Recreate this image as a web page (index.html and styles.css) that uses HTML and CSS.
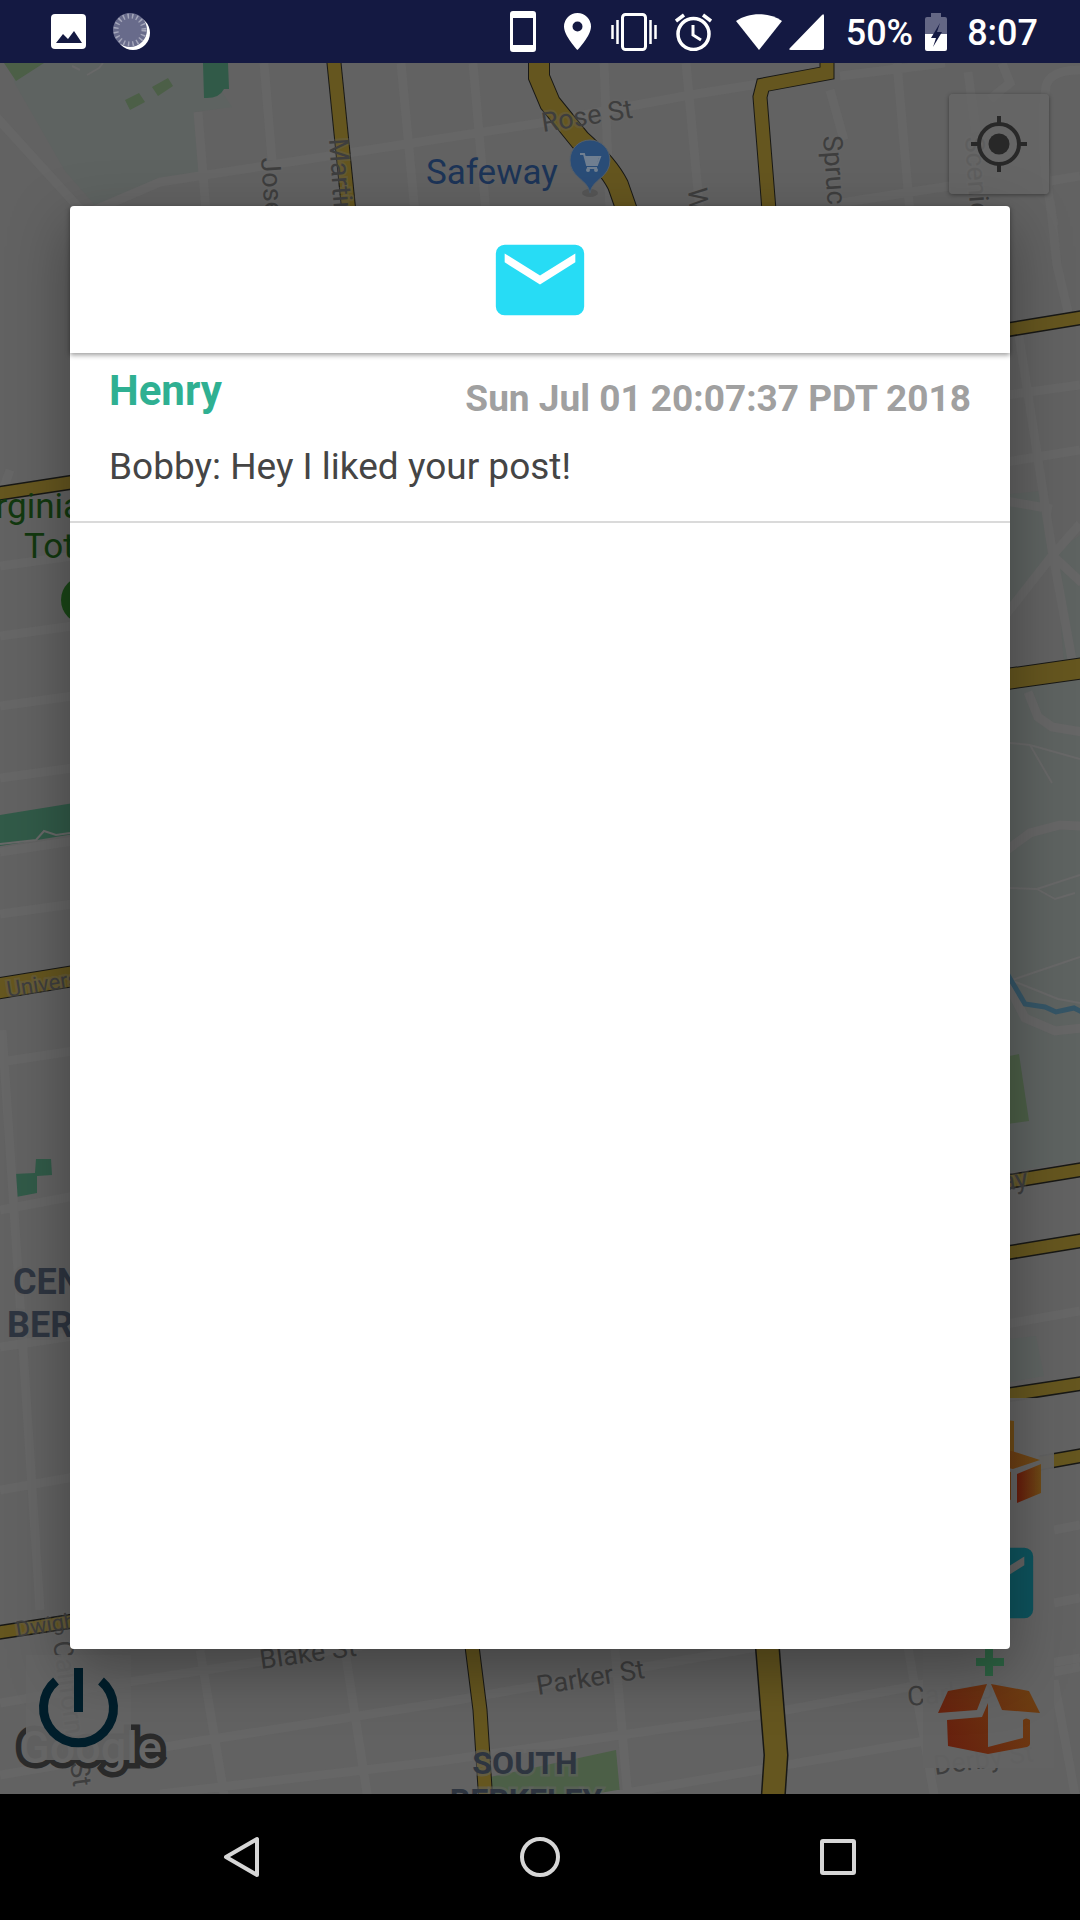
FILE: index.html
```html
<!DOCTYPE html>
<html lang="en">
<head>
<meta charset="utf-8">
<meta name="viewport" content="width=device-width, initial-scale=1">
<title>Messages</title>
<link rel="stylesheet" href="styles.css">
</head>
<body>
<header class="status">
  <div class="status-group">
    <svg width="35" height="35" viewBox="0 0 35 35"><rect width="35" height="35" rx="4" fill="#fff"/><path d="M5 29 12 20l5 5 6-8 8 12z" fill="#141942"/></svg>
    <svg width="38" height="39" viewBox="0 0 38 39"><circle cx="20" cy="21" r="17" fill="#fff"/><circle cx="17" cy="18" r="17" fill="#686b8b"/><circle cx="17" cy="18" r="14" fill="none" stroke="#a4a6ba" stroke-width="5" stroke-dasharray="1.5 3"/></svg>
  </div>
  <div class="status-group status-right">
    <svg class="i-phone" width="26" height="41" viewBox="0 0 26 41"><path fill="#fff" fill-rule="evenodd" d="M3 0h20a3 3 0 0 1 3 3v35a3 3 0 0 1-3 3H3a3 3 0 0 1-3-3V3a3 3 0 0 1 3-3zm0 7v27h20V7z"/></svg>
    <svg class="i-pin" width="27" height="37" viewBox="0 0 27 37"><path fill="#fff" fill-rule="evenodd" d="M13.500 0A13.500 13.500 0 0 1 27 13.500C27 23 13.500 37 13.500 37S0 23 0 13.500A13.500 13.500 0 0 1 13.500 0zm0 8.500a5 5 0 1 0 0 10 5 5 0 0 0 0-10z"/></svg>
    <svg class="i-vib" width="46" height="38" viewBox="0 0 46 38"><g fill="none" stroke="#fff" stroke-width="3"><rect x="11.500" y="1.500" width="23" height="35" rx="3"/><path d="M1.500 12v14M6.500 7v24M39.500 7v24M44.500 12v14" stroke-width="2.500"/></g></svg>
    <svg class="i-alarm" width="37" height="38" viewBox="0 0 37 38"><g fill="none" stroke="#fff" stroke-width="3.500"><circle cx="18.500" cy="21" r="15.500"/><path d="M1 8l8-6M36 8l-8-6"/><path d="M18 12v10l8 5" stroke-width="3"/></g></svg>
    <svg class="i-wifi" width="46" height="36" viewBox="0 0 46 36"><path fill="#fff" d="M23 36 0 7c13-9 33-9 46 0z"/></svg>
    <svg class="i-cell" width="35" height="36" viewBox="0 0 35 36"><path fill="#fff" d="M33 1q2-2 2 1v32q0 2-2 2H2q-3 0-1-2z"/></svg>
    <span class="percent">50%</span>
    <svg class="i-batt" width="22" height="38" viewBox="0 0 22 38"><path fill="#646785" d="M6 0h10v4h4q2 0 2 2v15H0V6q0-2 2-2h4z"/><path fill="#fff" d="M0 21h22v15q0 2-2 2H2q-2 0-2-2z"/><path fill="#141942" d="M15 10 6 25h5l-3 9 9-15h-5z"/></svg>
    <span>8:07</span>
  </div>
</header>

<main class="stage">
  <svg class="map" viewBox="0 63 1080 1731" preserveAspectRatio="xMidYMid slice" aria-label="Map">
    <rect y="63" width="1080" height="1731" fill="#626262"/>
    <!-- open ground -->
    <g fill="#5e6361">
      <path d="M14 63h189l29 44-37 5 5 66-40 8-60 25-35-40L14 82z"/>
      <path d="M1000 495l40-4 12 60-42 60zM1055 553l25-18v125l-16 3zM1000 690l80-10v480l-80 14z"/>
      <path d="M1000 1340l36-4 8 40-44 8z"/>
    </g>
    <!-- parks -->
    <g fill="#4c5f47">
      <path d="M4 63h40L16 81zM125 100l14-7 6 9-15 8zM152 87l16-9 5 8-15 10z"/>
      <path d="M1000 1058l19-4 10 67-29 4zM488 1794l2-17 126-27 4 44z"/>
    </g>
    <g fill="#315a48">
      <path d="M203 63h25l1 26h-5q-5 10-20 9z"/>
      <path d="M0 815l80-13v31l-80 13z"/>
      <path d="M14 1174l21-1 1-14h15l1 16-15 1v17l-21 4z"/>
    </g>
    <!-- side streets -->
    <g class="streets">
      <path d="M-10 110 90 220M198 112l8 100M264 63l8 97M401 63l14 150M473 63l13 150M95 210l65-28 240-37 140-22 150-28 75-12M840 76l105-13M604 63l6 150M686 63l14 150M897 63l13 150M968 72l8 60M1080 70q-30 0-34 16-8 60 8 140M1050 181l30-5M1002 63l8 20-20 16M830 90l14 50M840 203l110-17"/>
      <path d="M0 566l80-11M0 636l80-11M0 706l80-11M0 778l80-11M0 852l80-12M0 914l80-11M0 1062l80-12M0 1210l80-15M0 1347l80-12M0 1490l80-14M2 1030l12 180 26 400M10 470l-14 40"/>
      <path d="M1050 200l7 65 11 47M1019 336l33 214 21 115M1000 396l80-11M1000 463l80-13M1000 500l52 9M1000 622l52-66 28-32M1052 555l30 28M1000 855l30-22 30-8 22 1M1003 975l22 43 30 13 27-3M1028 692l10 25 14 10 30 5M1000 1325l80-14M1054 1530l26-5M1054 1603l26-5M1054 1672l26-5"/>
      <path d="M0 1703l70-12 310-48M0 1775l200-34 240-38 340-60M160 1794l280-33 320-46 170-32 150-25M500 1815l430-75M200 1650l25 150M345 1650l23 150M615 1649l13 150M905 1630l30 170M1054 1680l22 120"/>
    </g>
    <g fill="none" stroke="#686868" stroke-width="2">
      <path d="M72 66l8 4M87 75l12-7 4-5M1010 888l27 1 43-14M1037 889l18 10 20-6M1003 983l77-26M1013 981l45 18 22 4M1000 742l30 3 50 14M1030 745l22 38M0 844l36-4 8-9 12 4 14-2"/>
    </g>
    <path d="M1005 970l20 34 20 3 11 5 18-4 10 5" fill="none" stroke="#355566" stroke-width="5"/>
    <!-- main roads: casing, then fill -->
    <g class="casing">
      <path d="M333 53l17 170" stroke-width="15"/>
      <path d="M539 53v24l11 26 30 37q28 25 38 45l14 40" stroke-width="22"/>
      <path d="M827 53v20l-64 12-3 12 10 126" stroke-width="15"/>
      <path d="M-5 494l85-13M1000 331l85-14M1000 1183l85-14M1000 1254l85-14M1000 1396l85-13M1040 1463l45-8" stroke-width="15"/>
      <path d="M-5 989l85-14M1000 680l85-12" stroke-width="22"/>
      <path d="M-5 1633l85-13" stroke-width="15"/>
      <path d="M470 1630l10 80 6 94" stroke-width="15"/>
      <path d="M766 1630l10 125-4 60" stroke-width="25"/>
    </g>
    <g class="road">
      <path d="M333 53l17 170" stroke-width="13"/>
      <path d="M539 53v24l11 26 30 37q28 25 38 45l14 40" stroke-width="20"/>
      <path d="M827 53v20l-64 12-3 12 10 126" stroke-width="13"/>
      <path d="M-5 494l85-13M1000 331l85-14M1000 1183l85-14M1000 1254l85-14M1000 1396l85-13M1040 1463l45-8" stroke-width="12"/>
      <path d="M-5 989l85-14M1000 680l85-12" stroke-width="20"/>
      <path d="M-5 1633l85-13" stroke-width="12"/>
      <path d="M470 1630l10 80 6 94" stroke-width="13"/>
      <path d="M766 1630l10 125-4 60" stroke-width="22"/>
    </g>
    <!-- labels -->
    <g class="street-name">
      <text transform="translate(543 132) rotate(-9)">Rose St</text>
      <text transform="translate(261 158) rotate(86)">Josephine</text>
      <text transform="translate(329 139) rotate(86)">Martin</text>
      <text transform="translate(688 188) rotate(86)">Walnut</text>
      <text transform="translate(823 136) rotate(86)">Spruce</text>
      <text transform="translate(965 137) rotate(86)">Scenic</text>
      <text transform="translate(261 1669) rotate(-8)">Blake St</text>
      <text transform="translate(538 1695) rotate(-9)">Parker St</text>
      <text transform="translate(53 1642) rotate(82)">California St</text>
      <text transform="translate(908 1706) rotate(-5)">Carleton</text>
      <text transform="translate(935 1775) rotate(-8)">Derby St</text>
      <text transform="translate(1029 1187) rotate(-9)" text-anchor="end">Way</text>
    </g>
    <g class="street-name small">
      <text transform="translate(8 997) rotate(-9)">University</text>
      <text transform="translate(17 1637) rotate(-9)">Dwight</text>
    </g>
    <g class="poi">
      <text x="426" y="184" fill="#1c3457">Safeway</text>
      <text x="-13" y="518" fill="#12380f">irginia</text>
      <text x="24" y="558" fill="#12380f">Totland</text>
    </g>
    <circle cx="85" cy="600" r="24" fill="#1a4617"/>
    <g class="district">
      <text x="13" y="1294">CENTRAL</text>
      <text x="7" y="1337">BERKELEY</text>
    </g>
    <g class="district district-narrow">
      <text x="525" y="1774" text-anchor="middle">SOUTH</text>
      <text x="526" y="1811" text-anchor="middle">BERKELEY</text>
    </g>
    <ellipse cx="590" cy="193" rx="8" ry="4" fill="#565656"/>
    <path d="M590 193c-2-14-20-15-20-33a20 20 0 0 1 40 0c0 18-18 19-20 33z" fill="#2a4d78" stroke="#56606b" stroke-width="1"/>
    <path d="M580 154h4l3 11h10l3-8h-15M587 168h10" fill="none" stroke="#707f91" stroke-width="2"/><path d="M585 157h14l-2 7h-10z" fill="#707f91"/><circle cx="588" cy="170" r="2" fill="#707f91"/><circle cx="596" cy="170" r="2" fill="#707f91"/>
    <text class="brand" x="19" y="1763">Google</text>
  </svg>

  <button class="control locate" aria-label="My location">
    <svg width="60" height="60" viewBox="0 0 60 60"><circle cx="30" cy="30" r="20" fill="none" stroke="#282828" stroke-width="4"/><circle cx="30" cy="30" r="10.500" fill="#282828"/><path d="M30 2v8M30 50v8M2 30h8M50 30h8" stroke="#282828" stroke-width="4"/></svg>
  </button>
  <button class="control power" aria-label="Log out">
    <svg width="105" height="105" viewBox="0 0 105 105"><path d="M30 26a35 35 0 1 0 45 0" fill="none" stroke="#001e2b" stroke-width="9"/><path d="M52.500 13v44" stroke="#001e2b" stroke-width="9"/></svg>
  </button>
  <div class="actions">
    <button class="control" aria-label="My boxes">
      <svg width="131" height="131" viewBox="923 1398 131 131">
        <defs>
          <linearGradient id="ember" gradientUnits="userSpaceOnUse" x1="945" y1="1740" x2="1040" y2="1690"><stop offset="0" stop-color="#67200e"/><stop offset="1" stop-color="#6d4012"/></linearGradient>
          <linearGradient id="ember-face"><stop offset="0" stop-color="#671b0b"/><stop offset="1" stop-color="#6d4a16"/></linearGradient>
        </defs>
        <path d="M962 1428l26-10 26 3v34l-26 9-26-10z" fill="#6d4a16"/>
        <path d="M936 1460l26-8 50-1 28 9-27 9-25-5-25 5zM936 1466l24 9v28l-24-10zM964 1475l24-9 23 6v28l-23-8-24 10z" fill="url(#ember-face)"/>
        <path d="M1017 1474l24-10v29l-24 10z" fill="url(#ember-face)"/>
      </svg>
    </button>
    <button class="control" aria-label="Messages">
      <svg width="106" height="106" viewBox="0 0 24 24"><path fill="#0e535d" d="M20 4H4a2 2 0 0 0-2 2v12a2 2 0 0 0 2 2h16a2 2 0 0 0 2-2V6a2 2 0 0 0-2-2zm0 4-8 5-8-5V6l8 5 8-5z"/></svg>
    </button>
    <button class="control" aria-label="Add box">
      <svg width="131" height="131" viewBox="923 1637 131 131">
        <path d="M976 1662h28M989 1649v27" stroke="#2d6343" stroke-width="8"/>
        <path fill="url(#ember)" d="M938 1713l10-22 39-7-10 26zM991 1684l38 7 11 22-38-3zM947 1720l35-3 6-14v51l-40-8zM988 1754v-7l35-9v-18q3-3 7 0v24q0 2-3 3z"/>
      </svg>
    </button>
  </div>

  <section class="dialog" role="dialog" aria-label="Messages">
    <div class="dialog-head">
      <svg width="106" height="106" viewBox="0 0 24 24"><path fill="#27dcf5" d="M20 4H4a2 2 0 0 0-2 2v12a2 2 0 0 0 2 2h16a2 2 0 0 0 2-2V6a2 2 0 0 0-2-2zm0 4-8 5-8-5V6l8 5 8-5z"/></svg>
    </div>
    <ul class="messages">
      <li class="message">
        <div class="message-top">
          <h2 class="sender">Henry</h2>
          <time class="time">Sun Jul 01 20:07:37 PDT 2018</time>
        </div>
        <p class="body">Bobby: Hey I liked your post!</p>
      </li>
    </ul>
  </section>
</main>

<nav class="nav">
  <button class="nav-button" aria-label="Back"><svg width="44" height="44" viewBox="0 0 44 44"><path d="M6 22 37 4v36z"/></svg></button>
  <button class="nav-button" aria-label="Home"><svg width="44" height="44" viewBox="0 0 44 44"><circle cx="22" cy="22" r="18"/></svg></button>
  <button class="nav-button" aria-label="Recent apps"><svg width="44" height="44" viewBox="0 0 44 44"><rect x="6" y="6" width="32" height="32" rx="1"/></svg></button>
</nav>
</body>
</html>
```

FILE: styles.css
```css
* { box-sizing: border-box; }

body {
  margin: 0;
  min-height: 100vh;
  display: flex;
  flex-direction: column;
  background: #000;
  font-family: Roboto, "Liberation Sans", sans-serif;
}

button {
  border: 0;
  padding: 0;
  background: none;
  display: flex;
  align-items: center;
  justify-content: center;
}

svg { display: block; flex: none; }

/* Status bar */
.status {
  height: 63px;
  padding: 0 42px 0 51px;
  display: flex;
  align-items: center;
  justify-content: space-between;
  background: #141942;
  color: #fff;
  font-size: 36px;
  font-weight: 500;
}

.status-group {
  display: flex;
  align-items: center;
  gap: 27px;
}

.status-group span { padding-top: 2px; }
.status-right { gap: 20px; }
.i-phone { margin-right: 8px; }
.i-alarm { margin: 0 4px 0 -2px; }
.i-wifi { margin-right: -13px; }
.i-cell { margin-right: 2px; }
.i-batt { margin-left: -8px; }

/* Map and its controls */
.stage {
  flex: 1;
  position: relative;
  display: flex;
  padding: 143px 70px 145px;
  overflow: hidden;
}

.map {
  position: absolute;
  inset: 0;
  width: 100%;
  height: 100%;
}

.streets { fill: none; stroke: #666; stroke-width: 9; }
.casing { fill: none; stroke: #181815; }
.road { fill: none; stroke: #65561f; }

.street-name {
  font-size: 27px;
  fill: #3e3e3e;
  stroke: #666;
  stroke-opacity: 0.3;
  stroke-width: 4px;
  paint-order: stroke;
}

.small { font-size: 22px; }
.poi { font-size: 35px; }

.district {
  font-size: 36px;
  font-weight: 700;
  fill: #2e3540;
  stroke: #626262;
  stroke-opacity: 0.5;
  stroke-width: 5px;
  paint-order: stroke;
}

.district-narrow { font-size: 32px; }

.brand {
  font-size: 45px;
  font-weight: 500;
  fill: #666;
  stroke: #2a2a2a;
  stroke-width: 11px;
  paint-order: stroke;
}

.locate {
  position: absolute;
  top: 31px;
  right: 31px;
  width: 100px;
  height: 100px;
  border-radius: 4px;
  background: rgba(103, 103, 103, 0.8);
  box-shadow: 0 1px 4px rgba(0, 0, 0, 0.4);
}

.power {
  position: absolute;
  left: 26px;
  bottom: 34px;
  background: rgba(101, 101, 101, 0.9);
}

.actions {
  position: absolute;
  right: 26px;
  bottom: 26px;
  width: 131px;
  display: grid;
  grid-template-rows: 131px 108px 131px;
  background: rgba(99, 99, 99, 0.95);
}

/* Message dialog */
.dialog {
  flex: 1;
  position: relative;
  background: #fff;
  border-radius: 4px;
  box-shadow: 0 20px 60px rgba(0, 0, 0, 0.34);
}

.dialog-head {
  height: 147px;
  display: flex;
  align-items: center;
  justify-content: center;
  box-shadow: 0 2px 5px rgba(0, 0, 0, 0.4);
}

.messages {
  list-style: none;
  margin: 0;
  padding: 0;
}

.message {
  padding: 13px 39px 32px;
  border-bottom: 2px solid #dadada;
}

.message-top {
  display: flex;
  align-items: flex-end;
  justify-content: space-between;
}

.sender {
  margin: 0;
  padding-bottom: 5px;
  font-size: 42px;
  line-height: 50px;
  color: #2fb092;
}

.time {
  font-size: 37px;
  line-height: 44px;
  font-weight: 700;
  color: #a0a0a0;
}

.body {
  margin: 24px 0 0;
  font-size: 37px;
  line-height: 44px;
  color: #454545;
}

/* System navigation */
.nav {
  height: 126px;
  display: flex;
  justify-content: center;
  background: #000;
}

.nav-button { flex: 0 1 298px; }

.nav-button svg {
  fill: none;
  stroke: #d6d6d6;
  stroke-width: 4px;
  stroke-linejoin: round;
}
```
